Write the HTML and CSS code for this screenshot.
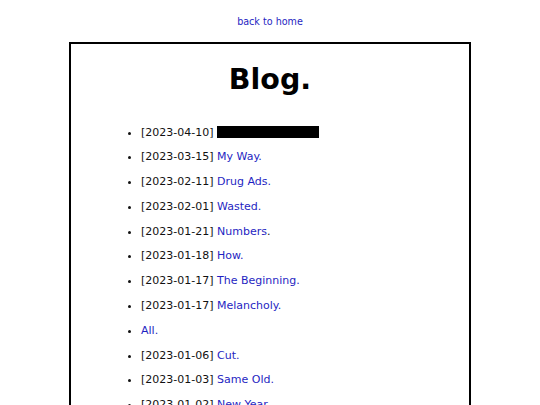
FILE: index.html
```html
<!DOCTYPE html>
<html>
<head>
<meta charset="utf-8">
<title>Blog.</title>
<link rel="stylesheet" href="styles.css">
</head>
<body>
<div class="top"><a href="#">back to home</a></div>
<main class="box">
  <h1 class="title">Blog.</h1>
  <ul class="posts">
    <li>[2023-04-10] <span class="redacted"></span></li>
    <li>[2023-03-15] <a href="#">My Way.</a></li>
    <li>[2023-02-11] <a href="#">Drug Ads.</a></li>
    <li>[2023-02-01] <a href="#">Wasted.</a></li>
    <li>[2023-01-21] <a href="#">Numbers</a>.</li>
    <li>[2023-01-18] <a href="#">How.</a></li>
    <li>[2023-01-17] <a href="#">The Beginning.</a></li>
    <li>[2023-01-17] <a href="#">Melancholy.</a></li>
    <li><a href="#">All.</a></li>
    <li>[2023-01-06] <a href="#">Cut.</a></li>
    <li>[2023-01-03] <a href="#">Same Old.</a></li>
    <li>[2023-01-02] <a href="#">New Year.</a></li>
  </ul>
</main>
</body>
</html>
```
FILE: styles.css
```css
html, body {
  margin: 0;
  padding: 0;
  background: #fff;
}
body {
  font-family: "DejaVu Sans", sans-serif;
  color: #000;
}
a {
  color: #1f1fc2;
  text-decoration: none;
}
.top {
  text-align: center;
  padding-top: 16px;
  font-size: 9.6px;
  line-height: 12px;
  margin-bottom: 14px;
}
.box {
  box-sizing: border-box;
  width: 402px;
  margin: 0 auto;
  border: 2px solid #000;
  padding: 19px 30px 20px;
}
.title {
  margin: 0;
  text-align: center;
  font-size: 28.5px;
  line-height: 34px;
  font-weight: bold;
}
.posts {
  margin: 23.5px 0 0;
  padding-left: 40px;
  font-size: 11px;
  line-height: 24.8px;
  color: #111;
}
.redacted {
  display: inline-block;
  width: 102px;
  height: 12px;
  background: #000;
  vertical-align: -2px;
}
```
